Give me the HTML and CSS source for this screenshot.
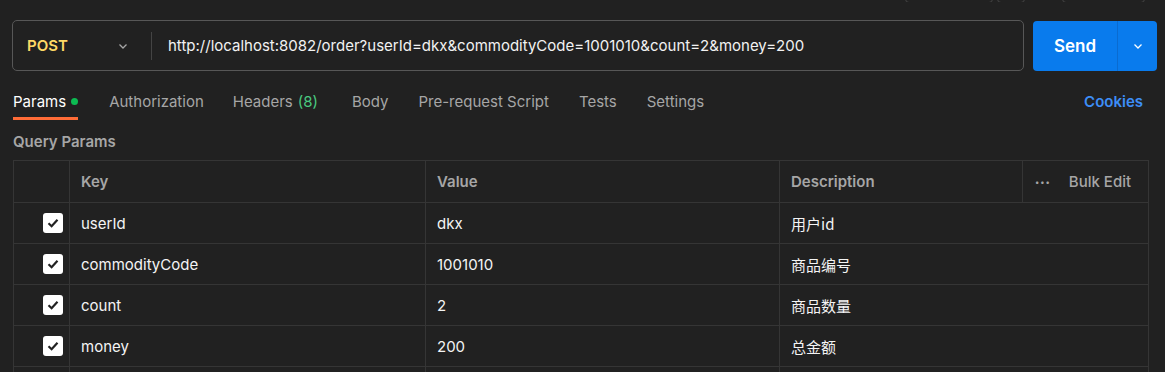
FILE: index.html
```html
<!DOCTYPE html>
<html lang="en">
<head>
  <meta charset="UTF-8">
  <title>Request</title>
  <link rel="stylesheet" href="styles.css">
</head>
<body>

<div class="top-strip">
  <span class="ghost ghost-a"></span>
  <span class="ghost ghost-b"></span>
  <span class="ghost ghost-c"></span>
</div>

<div class="request-bar">
  <div class="url-box">
    <div class="method">
      <span class="method-name">POST</span>
      <svg class="chev" width="12" height="12" viewBox="0 0 12 12"><path d="M2.5 4.5 L6 8 L9.5 4.5" fill="none" stroke="#a6a6a6" stroke-width="1.3"/></svg>
    </div>
    <div class="url-text">http://localhost:8082/order?userId=dkx&amp;commodityCode=1001010&amp;count=2&amp;money=200</div>
  </div>
  <div class="send-btn">
    <span class="send-label">Send</span>
    <span class="send-more">
      <svg width="12" height="12" viewBox="0 0 12 12"><path d="M2.5 4.5 L6 8 L9.5 4.5" fill="none" stroke="#fff" stroke-width="1.3"/></svg>
    </span>
  </div>
</div>

<div class="tabs">
  <div class="tab active">Params <span class="dot"></span></div>
  <div class="tab auth">Authorization</div>
  <div class="tab headers">Headers <span class="count">(8)</span></div>
  <div class="tab">Body</div>
  <div class="tab">Pre-request Script</div>
  <div class="tab">Tests</div>
  <div class="tab">Settings</div>
  <div class="cookies">Cookies</div>
</div>

<div class="section-title">Query Params</div>

<div class="params-table">
  <div class="row head">
    <div class="cell check-cell"></div>
    <div class="cell">Key</div>
    <div class="cell">Value</div>
    <div class="cell">Description</div>
    <div class="cell bulk"><span class="more">&#8226;&#8226;&#8226;</span> Bulk Edit</div>
  </div>
  <div class="row">
    <div class="cell check-cell"><span class="checkbox"><svg width="14" height="14" viewBox="0 0 14 14"><path d="M2.5 7.3 L5.6 10.2 L11.5 3.8" fill="none" stroke="#212121" stroke-width="2.2"/></svg></span></div>
    <div class="cell">userId</div>
    <div class="cell">dkx</div>
    <div class="cell desc">用户id</div>
  </div>
  <div class="row">
    <div class="cell check-cell"><span class="checkbox"><svg width="14" height="14" viewBox="0 0 14 14"><path d="M2.5 7.3 L5.6 10.2 L11.5 3.8" fill="none" stroke="#212121" stroke-width="2.2"/></svg></span></div>
    <div class="cell">commodityCode</div>
    <div class="cell">1001010</div>
    <div class="cell desc">商品编号</div>
  </div>
  <div class="row">
    <div class="cell check-cell"><span class="checkbox"><svg width="14" height="14" viewBox="0 0 14 14"><path d="M2.5 7.3 L5.6 10.2 L11.5 3.8" fill="none" stroke="#212121" stroke-width="2.2"/></svg></span></div>
    <div class="cell">count</div>
    <div class="cell">2</div>
    <div class="cell desc">商品数量</div>
  </div>
  <div class="row">
    <div class="cell check-cell"><span class="checkbox"><svg width="14" height="14" viewBox="0 0 14 14"><path d="M2.5 7.3 L5.6 10.2 L11.5 3.8" fill="none" stroke="#212121" stroke-width="2.2"/></svg></span></div>
    <div class="cell">money</div>
    <div class="cell">200</div>
    <div class="cell desc">总金额</div>
  </div>
  <div class="row">
    <div class="cell check-cell"></div>
    <div class="cell"></div>
    <div class="cell"></div>
    <div class="cell desc"></div>
  </div>
</div>

</body>
</html>
```

FILE: styles.css
```css
body {
  font-family: Inter, "Noto Sans", sans-serif;
  background: #212121;
  color: #ffffff;
  margin: 0;
  overflow: hidden;
  height: 372px;
}

/* cut off buttons above */
.top-strip {
  height: 2px;
  display: flex;
  justify-content: flex-end;
  padding-right: 20px;
  overflow: hidden;
}
.ghost {
  display: block;
  height: 8px;
  margin-top: -7px;
  border: 1px solid #444;
  border-radius: 4px;
}
.ghost-a { width: 86px; margin-right: 4px; }
.ghost-b { width: 26px; margin-right: 37px; }
.ghost-c { width: 81px; }

.request-bar {
  display: flex;
  gap: 9px;
  margin-top: 18px;
  padding: 0 8px 0 12px;
}

.url-box {
  flex: 1;
  height: 49px;
  border: 1px solid #575757;
  border-radius: 5px;
  display: flex;
  align-items: center;
}

.method {
  width: 139px;
  height: 28px;
  padding: 0 14px;
  display: flex;
  align-items: center;
  justify-content: space-between;
  border-right: 1px solid #444;
  box-sizing: border-box;
}
.method-name {
  color: #ffd966;
  font-weight: 600;
  font-size: 15px;
}
.chev {
  margin-right: 8px;
}

.url-text {
  padding-left: 16px;
  font-size: 15px;
  color: #f2f2f2;
  white-space: nowrap;
}

.send-btn {
  width: 124px;
  height: 50px;
  margin-top: 1px;
  background: #097bed;
  border-radius: 4px;
  display: flex;
}
.send-label {
  width: 84px;
  display: flex;
  align-items: center;
  justify-content: center;
  font-weight: 600;
  font-size: 17px;
}
.send-more {
  flex: 1;
  display: flex;
  align-items: center;
  justify-content: center;
  border-left: 1px solid #0a6bd0;
}

.tabs {
  display: flex;
  align-items: center;
  gap: 30px;
  padding: 0 22px 0 13px;
  margin-top: 16px;
  height: 33px;
}
.tab {
  font-size: 15px;
  color: #a6a6a6;
  height: 33px;
  box-sizing: border-box;
  display: flex;
  align-items: center;
  gap: 5px;
  padding-bottom: 4px;
}
.tab.active {
  color: #ffffff;
  border-bottom: 3px solid #ff6c37;
  padding-bottom: 1px;
}
.tab.auth {
  margin-left: 1px;
  margin-right: -1px;
}
.tab.headers {
  margin-right: 4px;
}
.dot {
  width: 7px;
  height: 7px;
  border-radius: 50%;
  background: #0cbb52;
}
.count {
  color: #4ac980;
}
.cookies {
  margin-left: auto;
  color: #3d8ef7;
  font-weight: 600;
  font-size: 15px;
  padding-bottom: 4px;
}

.section-title {
  padding-left: 13px;
  margin-top: 12px;
  font-size: 15px;
  font-weight: 600;
  color: #a6a6a6;
  height: 18px;
}

.params-table {
  margin: 10px 0 0 13px;
  width: 1134px;
  border-top: 1px solid #353535;
  border-left: 1px solid #353535;
  border-right: 1px solid #353535;
}

.row {
  display: grid;
  grid-template-columns: 56px 356px 354px 1fr;
  height: 40px;
  border-bottom: 1px solid #353535;
}
.row.head {
  grid-template-columns: 56px 356px 354px 243px 1fr;
  height: 41px;
}
.cell {
  display: flex;
  align-items: center;
  padding-left: 11px;
  font-size: 15px;
  color: #f4f4f4;
  border-right: 1px solid #353535;
}
.cell:last-child {
  border-right: none;
}
.head .cell {
  font-weight: 600;
  color: #a6a6a6;
}
.head .bulk {
  font-weight: 500;
  padding-left: 12px;
}
.more {
  font-size: 8px;
  letter-spacing: 1px;
  margin-right: 18px;
}
.check-cell {
  justify-content: flex-end;
  padding-right: 6px;
  padding-left: 0;
}
.checkbox {
  width: 20px;
  height: 20px;
  background: #ffffff;
  border-radius: 3px;
  display: flex;
  align-items: center;
  justify-content: center;
}
.desc {
  font-family: "Noto Sans CJK SC", Inter, sans-serif;
}
```
